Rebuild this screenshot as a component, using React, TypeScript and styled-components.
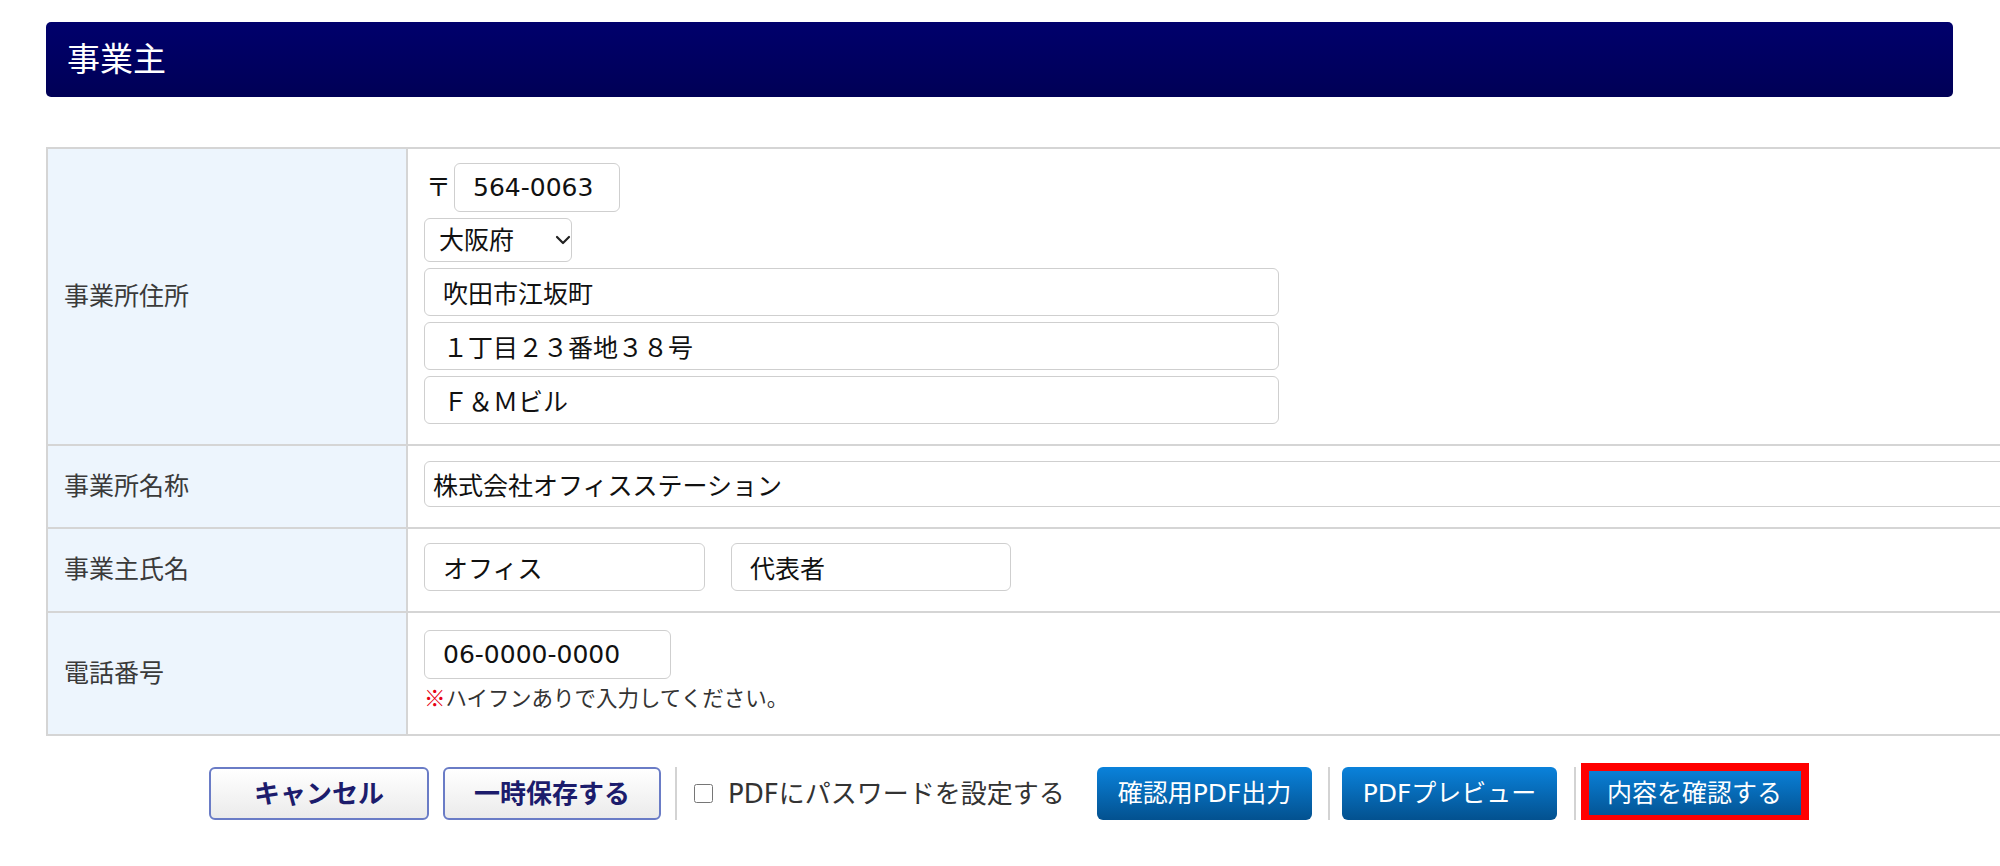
import React from "react";
import styled, { createGlobalStyle } from "styled-components";
import { ChevronDown } from "lucide-react";

const FONT = `"DejaVu Sans", "Noto Sans CJK JP", sans-serif`;
const LINE = "#d5d5d5";

const GlobalStyle = createGlobalStyle`
  html, body { margin: 0; padding: 0; background: #fff; overflow: hidden; }
  body { font-family: ${FONT}; color: #333; }
  * { box-sizing: border-box; }
`;

const Page = styled.div`
  width: 1907px;
  margin: 22px 0 0 46px;
`;

const TitleBar = styled.h1`
  margin: 0;
  height: 75px;
  display: flex;
  align-items: center;
  padding-left: 21px;
  border-radius: 5px;
  background: linear-gradient(to bottom, #00006c, #000056);
  color: #fff;
  font-size: 33px;
  font-weight: 400;
  line-height: 1;
`;

const FormTable = styled.div`
  margin-top: 50px;
  width: 2300px;
  border-top: 2px solid ${LINE};
  border-left: 2px solid ${LINE};
`;

const Row = styled.div<{ $h: number }>`
  display: grid;
  grid-template-columns: 360px 1fr;
  height: ${(p) => p.$h}px;
  border-bottom: 2px solid ${LINE};
`;

const LabelCell = styled.div`
  display: flex;
  align-items: center;
  padding: 0 0 6px 16px;
  background: #edf5fd;
  border-right: 2px solid ${LINE};
  font-size: 25px;
  color: #3a3a3a;
`;

const ValueCell = styled.div<{ $gap?: number }>`
  display: flex;
  flex-direction: column;
  justify-content: center;
  align-items: flex-start;
  gap: ${(p) => p.$gap ?? 6}px;
  padding: 0 0 6px 16px;
`;

const TextInput = styled.input<{ $w: number; $h?: number; $pad?: number }>`
  width: ${(p) => p.$w}px;
  height: ${(p) => p.$h ?? 48}px;
  padding: 0 0 0 ${(p) => p.$pad ?? 18}px;
  margin: 0;
  border: 1.5px solid #cfcfcf;
  border-radius: 6px;
  background: #fff;
  font-family: ${FONT};
  font-size: 25px;
  color: #111;
  outline: none;
`;

const PostalLine = styled.div`
  display: flex;
  align-items: center;
  gap: 3px;
`;

const PostalMark = styled.span`
  font-size: 25px;
  color: #111;
  line-height: 1;
  margin-left: 2px;
`;

const SelectBox = styled.div`
  position: relative;
  width: 148px;
  height: 44px;
`;

const PrefSelect = styled.select`
  appearance: none;
  width: 100%;
  height: 100%;
  margin: 0;
  padding: 0 0 0 14px;
  border: 1.5px solid #cfcfcf;
  border-radius: 6px;
  background: #fff;
  font-family: ${FONT};
  font-size: 25px;
  color: #111;
  outline: none;
`;

const SelectArrow = styled.span`
  position: absolute;
  right: -3px;
  top: 50%;
  transform: translateY(-50%);
  display: flex;
  color: #222;
  pointer-events: none;
`;

const NameLine = styled.div`
  display: flex;
  gap: 26px;
`;

const Note = styled.div`
  font-size: 21.5px;
  color: #333;
  line-height: 1.2;
  margin-top: 5px;
`;

const NoteMark = styled.span`
  color: #e60012;
  font-family: "Noto Sans CJK JP", sans-serif;
`;

const ButtonBar = styled.div`
  display: flex;
  align-items: center;
  justify-content: center;
  margin-top: 31px;
  padding-left: 16px;
`;

const GhostButton = styled.button<{ $w: number; $ml?: number }>`
  width: ${(p) => p.$w}px;
  height: 53px;
  margin: 0 0 0 ${(p) => p.$ml ?? 0}px;
  padding: 0;
  display: flex;
  align-items: center;
  justify-content: center;
  border: 2px solid #6a7cc6;
  border-radius: 6px;
  background: linear-gradient(to bottom, #ffffff, #ebebeb);
  color: #1c1c6c;
  font-family: ${FONT};
  font-size: 26px;
  font-weight: 700;
  line-height: 1;
`;

const PrimaryButton = styled.button<{ $w: number }>`
  width: ${(p) => p.$w}px;
  height: 53px;
  margin: 0;
  padding: 0;
  display: flex;
  align-items: center;
  justify-content: center;
  border: none;
  border-radius: 6px;
  background: linear-gradient(to bottom, #0a82db, #03518f);
  color: #fff;
  font-family: ${FONT};
  font-size: 25px;
  font-weight: 400;
  line-height: 1;
`;

const Divider = styled.span<{ $l: number; $r: number }>`
  width: 2px;
  height: 53px;
  background: #d3d3d3;
  margin: 0 ${(p) => p.$r}px 0 ${(p) => p.$l}px;
`;

const CheckLabel = styled.label`
  display: flex;
  align-items: center;
  gap: 15px;
  margin-right: 36px;
  font-size: 26px;
  color: #333;
  line-height: 1;
`;

const CheckBox = styled.input`
  width: 19px;
  height: 19px;
  margin: 0;
`;

const CheckText = styled.span`
  width: 333px;
  white-space: nowrap;
`;

const ConfirmWrap = styled.div`
  position: relative;
  display: flex;
`;

const Highlight = styled.span`
  position: absolute;
  top: -4px;
  left: -2px;
  right: -3px;
  bottom: -2px;
  border: 8px solid #ff0000;
  border-bottom-width: 7px;
  pointer-events: none;
`;

export default function App() {
  return (
    <>
      <GlobalStyle />
      <Page>
        <TitleBar>事業主</TitleBar>

        <FormTable>
          <Row $h={297}>
            <LabelCell>事業所住所</LabelCell>
            <ValueCell>
              <PostalLine>
                <PostalMark>〒</PostalMark>
                <TextInput $w={166} $h={49} defaultValue="564-0063" />
              </PostalLine>
              <SelectBox>
                <PrefSelect defaultValue="大阪府">
                  <option value="大阪府">大阪府</option>
                </PrefSelect>
                <SelectArrow>
                  <ChevronDown size={24} strokeWidth={2.2} />
                </SelectArrow>
              </SelectBox>
              <TextInput $w={855} defaultValue="吹田市江坂町" />
              <TextInput $w={855} defaultValue="１丁目２３番地３８号" />
              <TextInput $w={855} defaultValue="Ｆ＆Ｍビル" />
            </ValueCell>
          </Row>

          <Row $h={83}>
            <LabelCell>事業所名称</LabelCell>
            <ValueCell>
              <TextInput $w={1800} $h={46} $pad={8} defaultValue="株式会社オフィスステーション" />
            </ValueCell>
          </Row>

          <Row $h={84}>
            <LabelCell>事業主氏名</LabelCell>
            <ValueCell>
              <NameLine>
                <TextInput $w={281} defaultValue="オフィス" />
                <TextInput $w={280} defaultValue="代表者" />
              </NameLine>
            </ValueCell>
          </Row>

          <Row $h={123}>
            <LabelCell>電話番号</LabelCell>
            <ValueCell $gap={0}>
              <TextInput $w={247} $h={49} defaultValue="06-0000-0000" />
              <Note>
                <NoteMark>※</NoteMark>ハイフンありで入力してください。
              </Note>
            </ValueCell>
          </Row>
        </FormTable>

        <ButtonBar>
          <GhostButton $w={220}>キャンセル</GhostButton>
          <GhostButton $w={218} $ml={14}>一時保存する</GhostButton>
          <Divider $l={14} $r={17} />
          <CheckLabel>
            <CheckBox type="checkbox" />
            <CheckText>PDFにパスワードを設定する</CheckText>
          </CheckLabel>
          <PrimaryButton $w={215}>確認用PDF出力</PrimaryButton>
          <Divider $l={16} $r={12} />
          <PrimaryButton $w={215}>PDFプレビュー</PrimaryButton>
          <Divider $l={17} $r={7} />
          <ConfirmWrap>
            <PrimaryButton $w={223}>内容を確認する</PrimaryButton>
            <Highlight />
          </ConfirmWrap>
        </ButtonBar>
      </Page>
    </>
  );
}
